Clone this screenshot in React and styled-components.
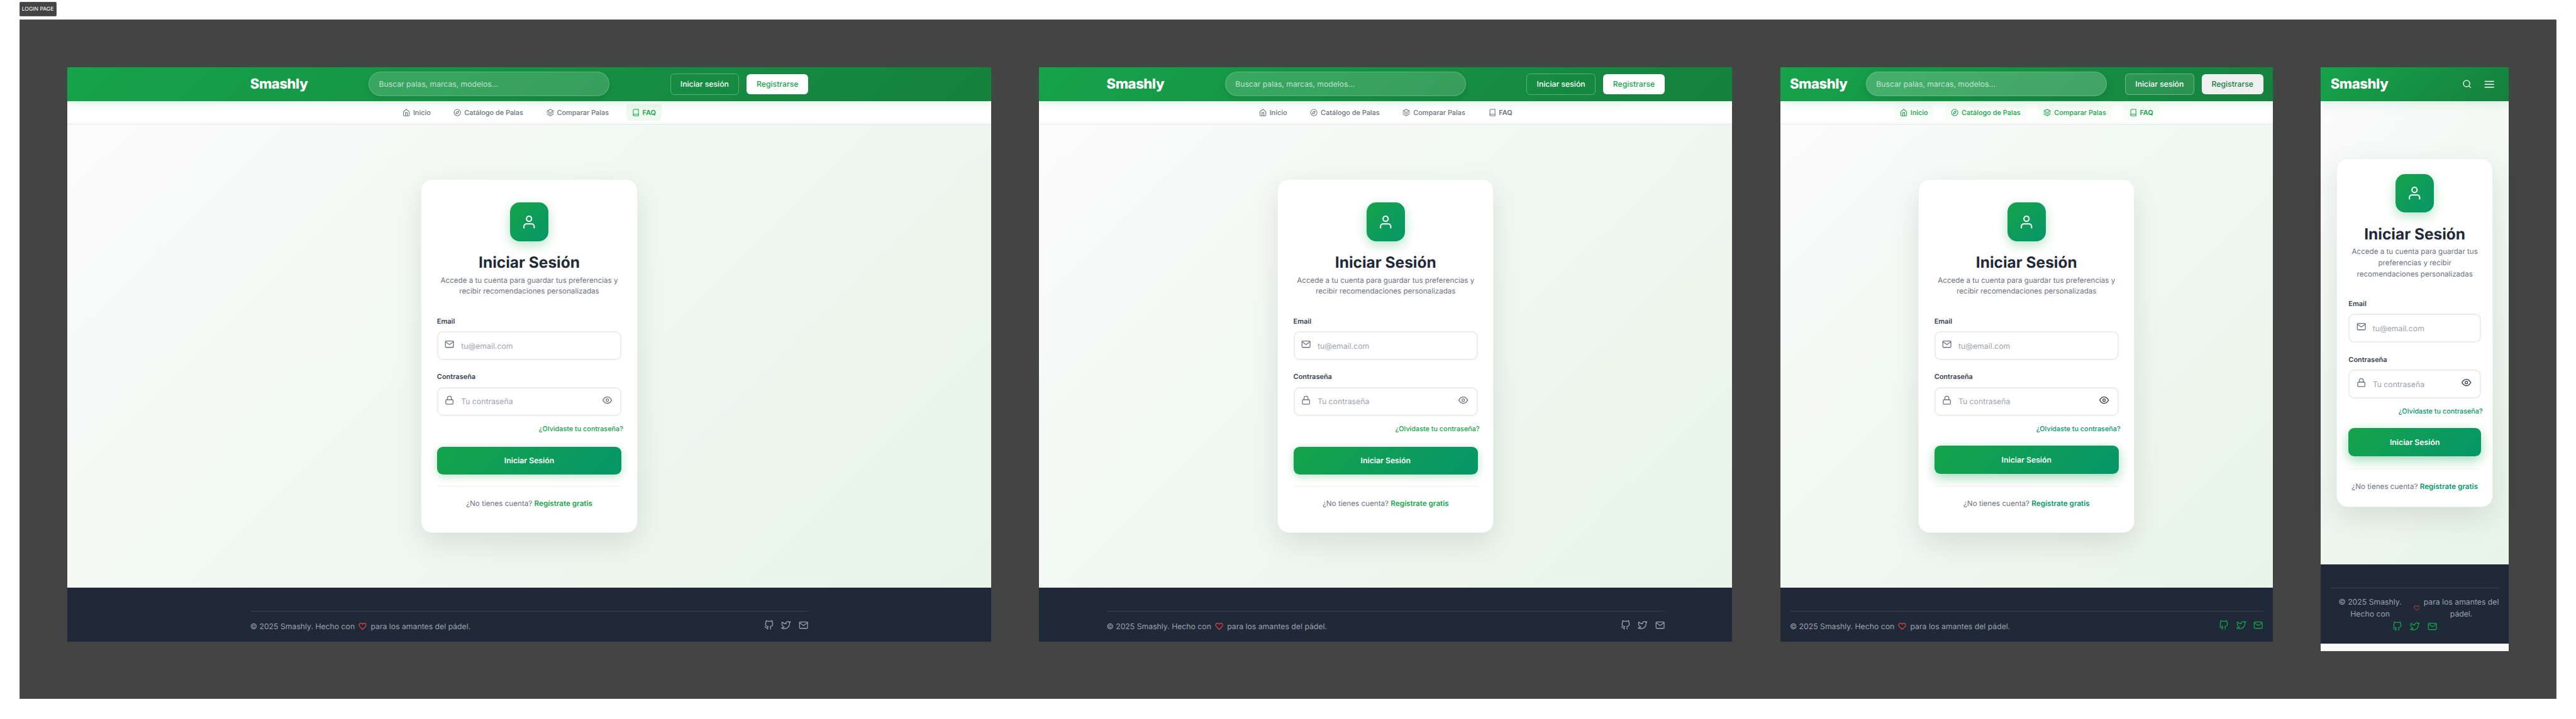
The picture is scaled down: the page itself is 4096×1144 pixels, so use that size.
import React from "react";
import styled, { createGlobalStyle, css } from "styled-components";
import { FiHome, FiCompass, FiLayers, FiBook, FiUser, FiMail, FiLock, FiEye, FiHeart, FiGithub, FiTwitter, FiSearch, FiMenu } from "react-icons/fi";

const SCALE = 4096 / 5354;
const u = (...values) => values.map((v) => `${+(v * SCALE).toFixed(4)}px`).join(" ");

const GlobalStyle = createGlobalStyle`
  *, *::before, *::after { box-sizing: border-box; }
  body { margin: 0; background: #fff; font-family: Inter, "Liberation Sans", sans-serif; overflow: hidden; text-rendering: geometricPrecision; }
  p, h1 { margin: 0; }
`;

const Sheet = styled.div`
  height: 1144px;
  padding: ${u(4, 40, 0, 40)};
`;

const SheetLabel = styled.div`
  display: flex;
  align-items: center;
  justify-content: center;
  width: ${u(77)};
  height: ${u(30)};
  margin-bottom: ${u(6)};
  border: 1px solid #565656;
  border-radius: ${u(2)};
  background: #444;
  color: #fff;
  font-size: ${u(11.2)};
  white-space: nowrap;
`;

const Board = styled.div`
  display: flex;
  align-items: flex-start;
  gap: ${u(100)};
  height: ${u(1414)};
  padding: ${u(100, 100, 0, 100)};
  border-radius: ${u(2)};
  background: #444;
  box-shadow: inset 0 0 0 1px #565656;
`;

const Frame = styled.div`
  display: flex;
  flex: none;
  flex-direction: column;
  width: ${(p) => u(p.$width)};
  height: ${(p) => u(p.$height)};
  background: #fafafa;
`;

const Header = styled.header`
  position: relative;
  z-index: 1;
  flex: none;
  height: ${u(70)};
  background: linear-gradient(135deg, #16a34a 0%, #15803d 100%);
  box-shadow: ${u(0, 4, 20)} rgba(22, 163, 74, 0.15);
`;

const Container = styled.div`
  display: flex;
  align-items: center;
  justify-content: space-between;
  max-width: ${u(1200)};
  height: 100%;
  margin: 0 auto;
  padding: ${u(0, 20)};
`;

const Logo = styled.div`
  color: #fff;
  font-size: ${u(28.8)};
  font-weight: 800;
  letter-spacing: -0.02em;
  line-height: 1.2;
`;

const SearchBox = styled.div`
  display: flex;
  align-items: center;
  width: ${u(500)};
  height: ${u(51)};
  padding: ${u(0, 20)};
  border: 1px solid rgba(255, 255, 255, 0.2);
  border-radius: ${u(50)};
  background: rgba(255, 255, 255, ${(p) => (p.$hover ? 0.2 : 0.15)});
  box-shadow: ${(p) => (p.$hover ? u(0, 6, 16) : u(0, 4, 12))} rgba(0, 0, 0, 0.1);
  color: rgba(255, 255, 255, 0.7);
  font-size: ${u(15.9)};
`;

const Actions = styled.div`
  display: flex;
  align-items: center;
  gap: ${(p) => u(p.$gap)};
`;

const HeaderButton = styled.div`
  display: flex;
  align-items: center;
  justify-content: center;
  border-radius: ${u(8)};
  font-size: ${u(16)};
  font-weight: 500;
  white-space: nowrap;
  ${(p) =>
    p.$solid
      ? css`
          width: ${u(128)};
          height: ${u(42)};
          background: ${p.$hover ? "#f0f0f0" : "#fff"};
          color: ${p.$hover ? "#15803d" : "#16a34a"};
        `
      : css`
          width: ${u(143)};
          height: ${u(44)};
          border: 1px solid rgba(255, 255, 255, 0.3);
          background: ${p.$hover ? "rgba(255, 255, 255, 0.1)" : "transparent"};
          color: #fff;
        `}
`;

const IconButton = styled.div`
  display: flex;
  padding: ${u(8)};
  color: #fff;
  svg { width: ${(p) => u(p.$size)}; height: ${(p) => u(p.$size)}; }
`;

const Nav = styled.nav`
  display: flex;
  flex: none;
  align-items: center;
  justify-content: center;
  gap: ${u(24)};
  height: ${u(49)};
  border-bottom: 1px solid #e5e7eb;
  background: #fff;
`;

const NavItem = styled.div`
  display: flex;
  align-items: center;
  gap: ${u(6)};
  height: ${u(34)};
  padding: ${u(0, 12)};
  border-radius: ${u(6)};
  background: ${(p) => (p.$state === "active" ? "#f0f9f0" : p.$state === "hover" ? "#f8fdf8" : "transparent")};
  color: ${(p) => (p.$state ? "#16a34a" : "#6b7280")};
  font-size: ${u(14.25)};
  font-weight: ${(p) => (p.$bold ? 600 : 500)};
  white-space: nowrap;
  svg { flex: none; width: ${u(16)}; height: ${u(16)}; }
`;

const Main = styled.main`
  display: flex;
  flex: none;
  align-items: center;
  justify-content: center;
  height: ${(p) => u(p.$height)};
  background: linear-gradient(135deg, #fbfbfb 0%, #f0f8f2 50%, #e8f4e7 100%);
`;

const Card = styled.section`
  width: ${(p) => u(p.$mobile ? 326 : 450)};
  height: ${(p) => u(p.$mobile ? 726 : 736.5)};
  padding: ${(p) => (p.$mobile ? u(32, 24) : u(48, 32))};
  border: 1px solid rgba(22, 163, 74, 0.1);
  border-radius: ${u(24)};
  background: #fff;
  box-shadow: ${u(0, 20, 60)} rgba(0, 0, 0, 0.1);
`;

const Avatar = styled.div`
  display: flex;
  align-items: center;
  justify-content: center;
  width: ${u(80)};
  height: ${u(80)};
  margin: 0 auto;
  border-radius: ${u(20)};
  background: linear-gradient(135deg, #16a34a 0%, #059669 100%);
  box-shadow: ${u(0, 8, 24)} rgba(22, 163, 74, 0.3);
  color: #fff;
  svg { width: ${u(32)}; height: ${u(32)}; }
`;

const Title = styled.h1`
  margin-top: ${u(18.6)};
  color: #1f2937;
  font-size: ${u(32)};
  font-weight: 700;
  line-height: ${u(51.2)};
  text-align: center;
`;

const Subtitle = styled.p`
  margin-top: ${u(1)};
  color: #6b7280;
  font-size: ${u(15.2)};
  line-height: ${u(23)};
  text-align: center;
`;

const Field = styled.div`
  margin-top: ${(p) => u(p.$first ? 41.4 : 26.6)};
`;

const Label = styled.div`
  height: ${u(29.4)};
  color: #374151;
  font-size: ${u(14.3)};
  font-weight: 600;
  line-height: ${u(18)};
`;

const Input = styled.div`
  display: flex;
  align-items: center;
  height: ${u(60)};
  padding: ${u(0, 17.5, 0, 13.5)};
  border: 2px solid #eaecef;
  border-radius: ${u(12)};
  color: #6b7280;
  svg { flex: none; width: ${u(20)}; height: ${u(20)}; margin-bottom: ${u(6)}; }
`;

const Placeholder = styled.span`
  flex: 1;
  margin-left: ${u(14)};
  color: #9ca3af;
  font-size: ${u(16)};
`;

const EyeIcon = styled(FiEye)`
  color: ${(p) => (p.$hover ? "#374151" : "#6b7280")};
`;

const Forgot = styled.div`
  margin: ${u(16, -3.5, 0, 0)};
  color: ${(p) => (p.$hover ? "#059669" : "#16a34a")};
  font-size: ${u(14.15)};
  font-weight: 500;
  line-height: ${u(24)};
  text-align: right;
`;

const Submit = styled.div`
  display: flex;
  align-items: center;
  justify-content: center;
  height: ${u(58)};
  margin-top: ${(p) => u(p.$hover ? 22 : 24)};
  margin-bottom: ${(p) => u(p.$hover ? 26 : 24)};
  border-radius: ${u(12)};
  background: linear-gradient(135deg, #16a34a 0%, #059669 100%);
  box-shadow: ${(p) => (p.$hover ? u(0, 8, 24) : u(0, 4, 16))} rgba(22, 163, 74, ${(p) => (p.$hover ? 0.4 : 0.3)});
  color: #fff;
  font-size: ${u(16)};
  font-weight: 600;
`;

const SignUp = styled.div`
  padding-top: ${u(23.5)};
  border-top: 1px solid #f0f1f3;
  color: #6b7280;
  font-size: ${u(15.25)};
  line-height: ${u(24)};
  text-align: center;
  white-space: nowrap;
  strong { color: ${(p) => (p.$hover ? "#059669" : "#16a34a")}; font-weight: 600; }
`;

const Footer = styled.footer`
  flex: none;
  height: ${(p) => u(p.$mobile ? 164 : 113)};
  padding-top: ${u(48)};
  background: #1f2937;
`;

const FooterInner = styled.div`
  max-width: ${u(1200)};
  margin: 0 auto;
  padding: ${u(0, 20)};
`;

const FooterRow = styled.div`
  display: flex;
  flex-direction: ${(p) => (p.$mobile ? "column" : "row")};
  align-items: ${(p) => (p.$mobile ? "center" : "flex-start")};
  justify-content: space-between;
  gap: ${(p) => u(p.$mobile ? 2.5 : 0)};
  padding-top: ${(p) => u(p.$mobile ? 15.5 : 19)};
  border-top: 1px solid #374151;
`;

const Copyright = styled.div`
  display: flex;
  align-items: center;
  gap: ${u(8)};
  color: #9ca3af;
  font-size: ${u(16)};
  line-height: ${u(25.8)};
  text-align: ${(p) => (p.$mobile ? "center" : "left")};
  white-space: ${(p) => (p.$mobile ? "normal" : "nowrap")};
  svg { flex: none; width: ${(p) => u(p.$mobile ? 13 : 17)}; height: ${u(17)}; color: #ef4444; }
`;

const Social = styled.div`
  display: flex;
  gap: ${u(16)};
  color: ${(p) => (p.$hover ? "#16a34a" : "#9ca3af")};
  svg { width: ${u(20)}; height: ${u(20)}; }
`;

const FrameTail = styled.div`
  flex: 1;
  border-top: 1px solid #e5e7eb;
  background: #fafafa;
`;

const NAV = [
  ["Inicio", FiHome],
  ["Catálogo de Palas", FiCompass],
  ["Comparar Palas", FiLayers],
  ["FAQ", FiBook],
];

function LoginScreen({ width, height = 1195, mobile = false, hover = false, activeFaq = false }) {
  return (
    <Frame $width={width} $height={height}>
      <Header>
        <Container>
          <Logo>Smashly</Logo>
          {mobile ? (
            <Actions $gap={8}>
              <IconButton $size={20}><FiSearch /></IconButton>
              <IconButton $size={24}><FiMenu /></IconButton>
            </Actions>
          ) : (
            <>
              <SearchBox $hover={hover}>Buscar palas, marcas, modelos...</SearchBox>
              <Actions $gap={16}>
                <HeaderButton $hover={hover}>Iniciar sesión</HeaderButton>
                <HeaderButton $solid $hover={hover}>Registrarse</HeaderButton>
              </Actions>
            </>
          )}
        </Container>
      </Header>
      {!mobile && (
        <Nav>
          {NAV.map(([label, Icon]) => {
            const faq = label === "FAQ";
            const state = hover ? "hover" : activeFaq && faq ? "active" : undefined;
            return (
              <NavItem key={label} $state={state} $bold={faq}>
                <Icon />
                {label}
              </NavItem>
            );
          })}
        </Nav>
      )}
      <Main $height={mobile ? 964 : 963}>
        <Card $mobile={mobile}>
          <Avatar><FiUser /></Avatar>
          <Title>Iniciar Sesión</Title>
          <Subtitle>Accede a tu cuenta para guardar tus preferencias y recibir recomendaciones personalizadas</Subtitle>
          <Field $first>
            <Label>Email</Label>
            <Input><FiMail /><Placeholder>tu@email.com</Placeholder></Input>
          </Field>
          <Field>
            <Label>Contraseña</Label>
            <Input><FiLock /><Placeholder>Tu contraseña</Placeholder><EyeIcon $hover={hover} /></Input>
          </Field>
          <Forgot $hover={hover}>¿Olvidaste tu contraseña?</Forgot>
          <Submit $hover={hover}>Iniciar Sesión</Submit>
          <SignUp $hover={hover}>¿No tienes cuenta? <strong>Regístrate gratis</strong></SignUp>
        </Card>
      </Main>
      <Footer $mobile={mobile}>
        <FooterInner>
          <FooterRow $mobile={mobile}>
            <Copyright $mobile={mobile}>
              <span>© 2025 Smashly. Hecho con</span>
              <FiHeart />
              <span>para los amantes del pádel.</span>
            </Copyright>
            <Social $hover={hover}><FiGithub /><FiTwitter /><FiMail /></Social>
          </FooterRow>
        </FooterInner>
      </Footer>
      {mobile && <FrameTail />}
    </Frame>
  );
}

export default function App() {
  return (
    <Sheet>
      <GlobalStyle />
      <SheetLabel>LOGIN PAGE</SheetLabel>
      <Board>
        <LoginScreen width={1920} activeFaq />
        <LoginScreen width={1440} />
        <LoginScreen width={1024} hover />
        <LoginScreen width={390} height={1214} mobile hover />
      </Board>
    </Sheet>
  );
}
